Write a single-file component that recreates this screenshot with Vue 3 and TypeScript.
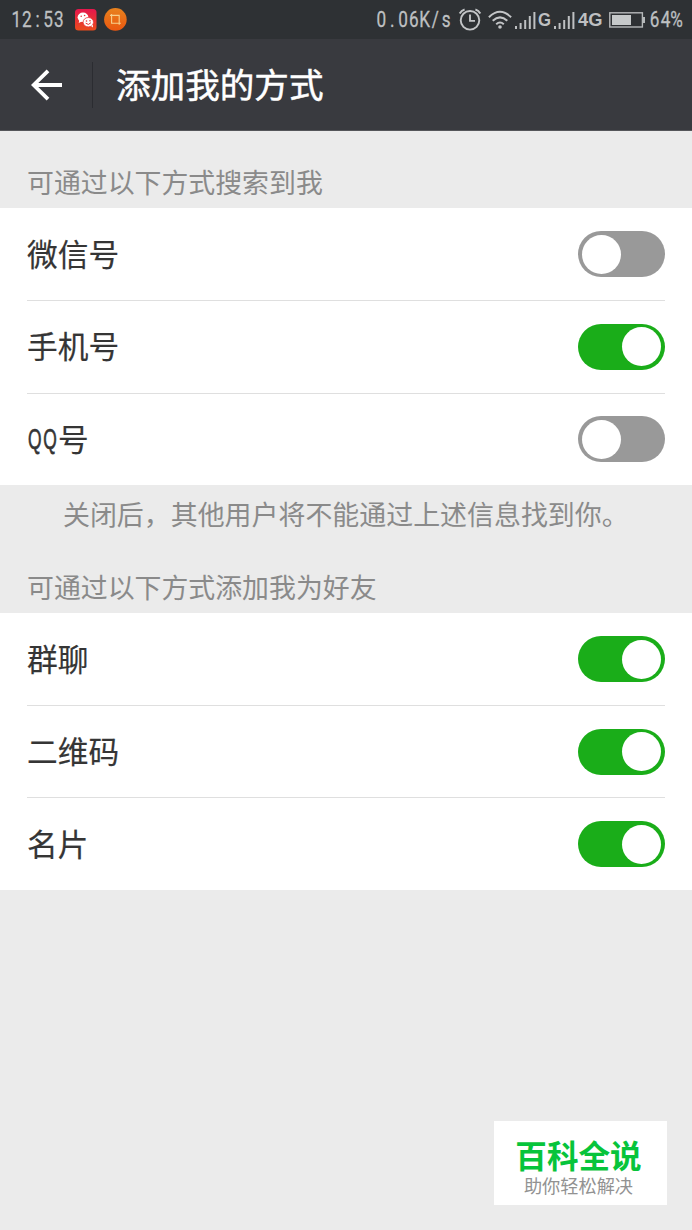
<script setup lang="ts">
import { ref } from 'vue'

interface Option {
  label: string
  narrow?: string
  on: boolean
}

interface Glyph {
  char: string
  shift: string
}

const searchOptions = ref<Option[]>([
  { label: '微信号', on: false },
  { label: '手机号', on: true },
  { label: '号', narrow: 'QQ', on: false },
])

const friendOptions = ref<Option[]>([
  { label: '群聊', on: true },
  { label: '二维码', on: true },
  { label: '名片', on: true },
])

// Narrow monospaced lettering: every glyph is centred in a cell and squeezed horizontally.
function cells(text: string, pitch: number, squeeze: number): Glyph[] {
  return [...text].map((char, i) => ({
    char,
    shift: `translate(${(i + 0.5) * pitch} 0) scale(${squeeze} 1)`,
  }))
}

const clock = cells('12:53', 10.6, 0.78)
const speed = cells('0.06K/s', 10.8, 0.78)
const percent = cells('64%', 11, 0.78)
const bars = [3, 6, 9, 13, 17]
</script>

<template>
  <div class="screen">
    <div class="status">
      <svg class="clock" width="54" height="39">
        <text v-for="(g, i) in clock" :key="i" :transform="g.shift" y="27">{{ g.char }}</text>
      </svg>
      <svg class="app-red" width="22" height="22" viewBox="0 0 22 22">
        <defs>
          <linearGradient id="red" x1="0" y1="0" x2="0" y2="1">
            <stop offset="0" stop-color="#e5174d" />
            <stop offset="1" stop-color="#ea4b1c" />
          </linearGradient>
        </defs>
        <rect width="21.5" height="21.5" rx="3.5" fill="url(#red)" />
        <ellipse cx="8" cy="8.3" rx="5.4" ry="4.8" fill="#fff" />
        <path d="M4.5 11l-.8 3 3.2-1.5z" fill="#fff" />
        <ellipse cx="13.3" cy="13.2" rx="5.2" ry="4.7" fill="#fff" stroke="#e83438" stroke-width=".8" />
        <path d="M16 17l2 1.5-.3-3z" fill="#fff" />
        <path d="M10.7 14.2q2.8 2.7 5.2-.5" fill="none" stroke="#e83438" stroke-width="1" />
        <g fill="#e83438">
          <circle cx="6.2" cy="7.3" r=".8" /><circle cx="9.6" cy="6.5" r=".8" />
          <circle cx="11.5" cy="12" r=".8" /><circle cx="15" cy="11.7" r=".8" />
        </g>
      </svg>
      <svg class="app-orange" width="23" height="23" viewBox="0 0 23 23">
        <defs>
          <linearGradient id="orange" x1="0" y1="0" x2="0" y2="1">
            <stop offset="0" stop-color="#e8821e" />
            <stop offset="1" stop-color="#ea5710" />
          </linearGradient>
        </defs>
        <circle cx="11.4" cy="11.4" r="11.3" fill="url(#orange)" />
        <path d="M6 7.4h9.2v9.4M16.8 15.3H7.6V6" fill="none" stroke="#f8cf8c" stroke-width="1.1" />
      </svg>
      <span class="grow"></span>
      <svg class="speed" width="76" height="39">
        <text v-for="(g, i) in speed" :key="i" :transform="g.shift" y="27">{{ g.char }}</text>
      </svg>
      <svg class="alarm" width="24" height="24" viewBox="0 0 24 24">
        <g fill="none" stroke="#c3c5c7" stroke-width="1.9">
          <circle cx="12" cy="12.3" r="9.3" />
          <path d="M12 6.5v6.4h5" />
          <path d="M1.7 5.5Q3.3 2.4 6.6 1.5M17.4 1.5q3.3.9 4.9 4" stroke-width="2" />
        </g>
      </svg>
      <svg class="wifi" width="24" height="20" viewBox="0 0 24 20">
        <g fill="none" stroke="#c3c5c7" stroke-width="2">
          <path d="M.9 7.2Q12-3.6 23.1 7.2" />
          <path d="M4.7 10.8q7.3-6.8 14.6 0" />
          <path d="M8.2 14.2q3.8-3.4 7.6 0" />
        </g>
        <circle cx="12" cy="17" r="1.8" fill="#c3c5c7" />
      </svg>
      <svg class="signal" width="21" height="18">
        <rect v-for="(h, i) in bars" :key="i" :x="i * 4.6" :y="17 - h" width="2" :height="h" />
      </svg>
      <svg class="net-g" width="14" height="39"><text x="0" y="26" textLength="13" lengthAdjust="spacingAndGlyphs">G</text></svg>
      <svg class="signal second" width="21" height="18">
        <rect v-for="(h, i) in bars" :key="i" :x="i * 4.6" :y="17 - h" width="2" :height="h" />
      </svg>
      <svg class="net-4g" width="26" height="39"><text x="0" y="26" textLength="24.5" lengthAdjust="spacingAndGlyphs">4G</text></svg>
      <svg class="battery" width="37" height="16" viewBox="0 0 37 16">
        <rect x=".8" y=".8" width="32.6" height="14.2" fill="none" stroke="#b5b8b9" stroke-width="1.4" />
        <rect x="3" y="3" width="19" height="10" fill="#c6c9ca" />
        <path d="M34 5h2v6h-2z" fill="#b5b8b9" />
      </svg>
      <svg class="percent" width="34" height="39">
        <text v-for="(g, i) in percent" :key="i" :transform="g.shift" y="27">{{ g.char }}</text>
      </svg>
    </div>

    <header class="bar">
      <svg class="back" width="32" height="32" viewBox="0 0 32 32">
        <path d="M17 1.8L2.6 16 17 30.2M2.6 16H31" fill="none" stroke="#fff" stroke-width="3.8" />
      </svg>
      <span class="rule"></span>
      <h1>添加我的方式</h1>
    </header>

    <h2 class="first">可通过以下方式搜索到我</h2>
    <section class="group">
      <div v-for="(o, i) in searchOptions" :key="i" class="row">
        <span class="label">
          <svg v-if="o.narrow" class="narrow" width="31" height="48">
            <text v-for="(g, n) in cells(o.narrow, 15.3, 0.58)" :key="n" :transform="g.shift" y="35">{{ g.char }}</text>
          </svg>{{ o.label }}
        </span>
        <button class="switch" :class="{ on: o.on }" @click="o.on = !o.on"><i></i></button>
      </div>
    </section>
    <p class="note">关闭后，其他用户将不能通过上述信息找到你。</p>

    <h2 class="second-title">可通过以下方式添加我为好友</h2>
    <section class="group">
      <div v-for="(o, i) in friendOptions" :key="i" class="row">
        <span class="label">{{ o.label }}</span>
        <button class="switch" :class="{ on: o.on }" @click="o.on = !o.on"><i></i></button>
      </div>
    </section>

    <aside class="badge">
      <strong>百科全说</strong>
      <span>助你轻松解决</span>
    </aside>
  </div>
</template>

<style>
body {
  background: #ebebeb;
}
</style>

<style scoped>
.screen {
  position: relative;
  width: 692px;
  height: 1230px;
  overflow: hidden;
  background: #ebebeb;
  font-family: 'Noto Sans CJK SC', sans-serif;
}
.screen svg {
  display: block;
  flex: none;
}
.status {
  display: flex;
  align-items: center;
  height: 39px;
  box-sizing: border-box;
  padding: 0 9px 0 11px;
  background: #2e3134;
}
.status text {
  fill: #bec0c2;
  stroke: #bec0c2;
  stroke-width: 0.3px;
  font: 22px Roboto, sans-serif;
  text-anchor: middle;
}
.app-red { margin-left: 10px; }
.app-orange { margin-left: 7px; }
.grow { flex: 1; }
.speed { margin-right: 6px; }
.alarm { margin-right: 6px; }
.wifi { margin-right: 3px; }
.signal { fill: #bec0c2; margin-top: 2px; }
.signal.second { margin-left: 2px; }
.status .net-g { margin-left: 2px; }
.status .net-4g { margin-left: 3px; }
.status .net-g text,
.status .net-4g text {
  font: bold 19px 'Liberation Sans', sans-serif;
  stroke: none;
  text-anchor: start;
}
.battery { margin-left: 5px; }
.percent { margin-left: 3px; }
.bar {
  display: flex;
  align-items: center;
  height: 92px;
  box-sizing: border-box;
  padding-left: 31px;
  background: #393a3f;
  border-bottom: 1px solid #55565a;
}
.rule {
  width: 1px;
  height: 46px;
  margin: 0 23px 0 29px;
  background: #2b2c31;
}
h1 {
  margin: 0;
  padding-bottom: 4px;
  color: #fff;
  font-size: 34.6px;
  font-weight: 400;
  -webkit-text-stroke: 0.5px #fff;
  line-height: 50px;
}
h2 {
  margin: 0;
  padding-left: 27px;
  color: #8a8a8a;
  font-size: 26.9px;
  font-weight: 400;
  line-height: 40px;
}
.first {
  padding-top: 31px;
  height: 46px;
}
.second-title {
  padding-top: 28px;
  height: 46px;
}
.group {
  padding: 0 27px;
  background: #fff;
}
.row {
  display: flex;
  align-items: center;
  justify-content: space-between;
  height: 92.3px;
  box-sizing: border-box;
}
.row + .row {
  border-top: 1px solid #dfdfdf;
}
.label {
  display: flex;
  align-items: center;
  padding-bottom: 3px;
  color: #353535;
  font-size: 30.7px;
  -webkit-text-stroke: 0.2px #353535;
  line-height: 40px;
}
.narrow text {
  fill: #353535;
  stroke: #353535;
  stroke-width: 0.7px;
  font-family: 'Liberation Sans', sans-serif;
  font-size: 30px;
  text-anchor: middle;
}
.switch {
  display: flex;
  width: 87px;
  height: 46px;
  box-sizing: border-box;
  padding: 3.5px 4px;
  border: 0;
  border-radius: 23px;
  background: #999;
}
.switch i {
  width: 39px;
  height: 39px;
  border-radius: 50%;
  background: #fff;
}
.switch.on {
  justify-content: flex-end;
  background: #1aad19;
}
.note {
  margin: 0;
  padding: 9px 0 5px 63px;
  color: #8a8a8a;
  font-size: 26.95px;
  line-height: 40px;
  white-space: nowrap;
}
.badge {
  position: absolute;
  left: 494px;
  top: 1121px;
  display: flex;
  flex-direction: column;
  align-items: center;
  width: 173px;
  height: 84px;
  box-sizing: border-box;
  padding: 14px 4px 0 0;
  background: #fff;
}
.badge strong {
  color: #07c43b;
  font-size: 31.6px;
  font-weight: 700;
  line-height: 39px;
}
.badge span {
  color: #929292;
  font-size: 18.2px;
  line-height: 22px;
}
</style>
